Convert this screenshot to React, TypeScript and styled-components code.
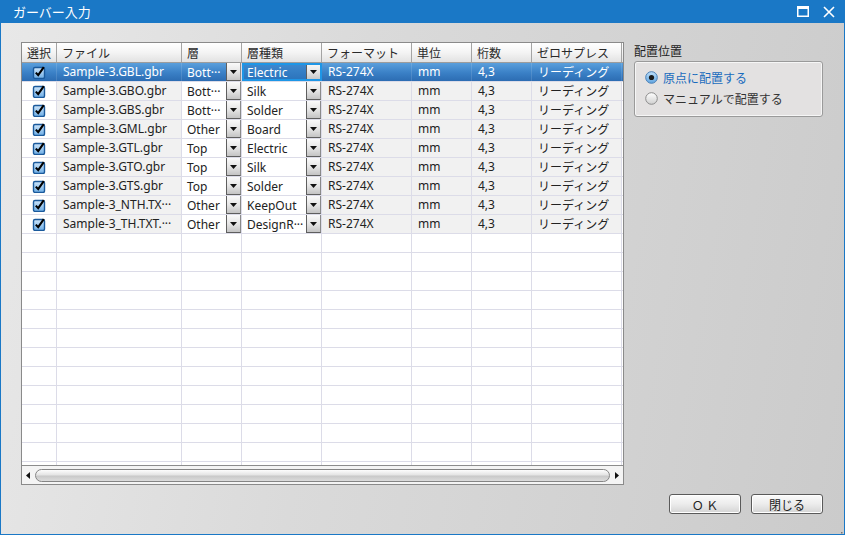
import React from "react";
import styled, { createGlobalStyle, css } from "styled-components";

const Global = createGlobalStyle`
  html, body { margin: 0; padding: 0; }
  body { font-family: "Noto Sans", "Noto Sans CJK JP", sans-serif; }
  #root { width: 845px; height: 535px; }
`;

const Window = styled.div`
  width: 845px;
  height: 535px;
  box-sizing: border-box;
  border: 1px solid #1a78c6;
  border-top: none;
  display: flex;
  flex-direction: column;
  position: relative;
  overflow: hidden;
`;

const TitleBar = styled.div`
  height: 23px;
  flex: none;
  background: #1a78c6;
  display: flex;
  align-items: center;
  padding: 0 6px 0 12px;
  color: #fff;
  font-size: 13px;
  font-family: "Noto Sans CJK JP", sans-serif;
`;

const Title = styled.div`
  flex: 1;
  line-height: 23px;
  margin-top: -1px;
`;

const TitleButtons = styled.div`
  display: flex;
  align-items: center;
  gap: 8px;
`;

const TitleBtn = styled.div`
  width: 18px;
  height: 18px;
  display: flex;
  align-items: center;
  justify-content: center;
`;

const Body = styled.div`
  flex: 1;
  background: linear-gradient(100deg, #e8e8e8 0%, #dadada 40%, #cbcbcb 100%);
  display: grid;
  grid-template-columns: 603px 189px;
  column-gap: 10px;
  padding: 19px 21px 20px 20px;
  box-sizing: border-box;
  font-family: "Noto Sans", "Noto Sans CJK JP", sans-serif;
  font-size: 12px;
  color: #222;
`;

const GridBox = styled.div`
  height: 443px;
  box-sizing: border-box;
  border: 1px solid #8a8a8a;
  background: #fff;
  display: flex;
  flex-direction: column;
  overflow: hidden;
`;

const Rows = styled.div`
  flex: 1;
  overflow: hidden;
`;

const COLS = "35px 125px 60px 80px 90px 60px 60px 90px 1fr";

const HeaderRow = styled.div`
  display: grid;
  grid-template-columns: ${COLS};
  height: 20px;
  box-sizing: border-box;
  border-bottom: 1px solid #9c9c9c;
  background: linear-gradient(#ffffff, #f4f4f4 50%, #e2e2e2);
`;

const HeaderCell = styled.div`
  border-right: 1px solid #a4a4a4;
  padding-left: 5px;
  font-family: "Noto Sans CJK JP", sans-serif;
  font-size: 12px;
  line-height: 19px;
  color: #2a2a2a;
  white-space: nowrap;
  overflow: hidden;
`;

const Row = styled.div<{ $sel?: boolean }>`
  display: grid;
  grid-template-columns: ${COLS};
  height: 19px;
  box-sizing: border-box;
  border-bottom: 1px solid #dcdce8;
  ${(p) =>
    p.$sel &&
    css`
      background: linear-gradient(#5a9fdc, #3a80c6 55%, #2c6cb2);
      color: #fff;
    `}
`;

const Cell = styled.div<{ $bg?: string; $sel?: boolean; $center?: boolean; $jp?: boolean }>`
  border-right: 1px solid #dcdce8;
  background: ${(p) => (p.$sel ? "transparent" : p.$bg || "#fff")};
  padding-left: ${(p) => (p.$center ? "0" : "6px")};
  display: flex;
  align-items: center;
  justify-content: ${(p) => (p.$center ? "center" : "flex-start")};
  white-space: nowrap;
  overflow: hidden;
  line-height: 18px;
  font-family: ${(p) => (p.$jp ? `"Noto Sans CJK JP", sans-serif` : `"Noto Sans", "Noto Sans CJK JP", sans-serif`)};
  ${(p) => p.$sel && css`border-right-color: rgba(255,255,255,0.12);`}
`;

const ComboCell = styled.div<{ $sel?: boolean; $focus?: boolean }>`
  border-right: 1px solid #dcdce8;
  background: ${(p) => (p.$sel ? "transparent" : "#fff")};
  display: flex;
  align-items: stretch;
  overflow: hidden;
  box-sizing: border-box;
  ${(p) =>
    p.$focus &&
    css`
      outline: 2px solid #1e96e6;
      outline-offset: -2px;
      background: linear-gradient(#3f8ad0, #2a72ba);
    `}
`;

const ComboText = styled.div`
  flex: 1;
  padding-left: 5px;
  display: flex;
  align-items: center;
  white-space: nowrap;
  overflow: hidden;
`;

const ComboBtn = styled.div`
  width: 15px;
  flex: none;
  box-sizing: border-box;
  border-left: 1px solid #5e5e5e;
  border-right: 1px solid #8a8a8a;
  border-bottom: 1px solid #5e5e5e;
  background: linear-gradient(#fafafa, #e6e6e6 50%, #c4c4c4);
  display: flex;
  align-items: center;
  justify-content: center;
`;

const Scrollbar = styled.div`
  height: 19px;
  flex: none;
  box-sizing: border-box;
  border-top: 1px solid #8c8c8c;
  background: #f4f4f4;
  display: flex;
  align-items: center;
  padding: 0 3px 0 3px;
  gap: 4px;
`;

const Arrow = styled.div`
  width: 6px;
  display: flex;
  justify-content: center;
`;

const Thumb = styled.div`
  flex: 1;
  height: 13px;
  box-sizing: border-box;
  border: 1px solid #858585;
  border-radius: 7px;
  background: linear-gradient(#fdfdfd, #e4e4e4 45%, #c9c9c9 55%, #dcdcdc);
`;

const Side = styled.div`
  display: flex;
  flex-direction: column;
`;

const SideLabel = styled.div`
  font-family: "Noto Sans CJK JP", sans-serif;
  font-size: 12px;
  color: #222;
  line-height: 16px;
  margin-top: 1px;
  margin-bottom: 2px;
`;

const Group = styled.div`
  height: 56px;
  box-sizing: border-box;
  border: 1px solid #9a9a9a;
  border-radius: 3px;
  background: #e3e1e1;
  box-shadow: inset 0 0 0 1px #f6f6f6;
  padding: 6px 0 0 10px;
  display: flex;
  flex-direction: column;
  gap: 3px;
`;

const Radio = styled.div<{ $on?: boolean }>`
  display: flex;
  align-items: center;
  gap: 5px;
  height: 18px;
  font-family: "Noto Sans CJK JP", sans-serif;
  font-size: 12px;
  color: ${(p) => (p.$on ? "#1a6bbd" : "#333")};
`;

const Buttons = styled.div`
  margin-top: auto;
  display: flex;
  justify-content: flex-end;
  gap: 10px;
`;

const Button = styled.div`
  width: 72px;
  height: 20px;
  box-sizing: border-box;
  border: 1px solid #5a5a5a;
  border-radius: 3px;
  background: linear-gradient(#fbfbfb, #ececec 50%, #d4d4d4);
  box-shadow: inset 0 0 0 1px #ffffff;
  display: flex;
  align-items: center;
  justify-content: center;
  font-family: "Noto Sans CJK JP", sans-serif;
  font-size: 12px;
  color: #222;
`;

const Grip = styled.div`
  position: absolute;
  right: 1px;
  bottom: 1px;
  width: 10px;
  height: 10px;
`;

const Tri = ({ dir }: { dir: "down" | "left" | "right" }) => {
  if (dir === "down")
    return (
      <svg width="7" height="4" viewBox="0 0 7 4">
        <path d="M0 0H7L3.5 4Z" fill="#111" />
      </svg>
    );
  if (dir === "left")
    return (
      <svg width="4" height="7" viewBox="0 0 4 7">
        <path d="M4 0V7L0 3.5Z" fill="#111" />
      </svg>
    );
  return (
    <svg width="4" height="7" viewBox="0 0 4 7">
      <path d="M0 0V7L4 3.5Z" fill="#111" />
    </svg>
  );
};

const Check = () => (
  <svg width="14" height="14" viewBox="0 0 14 14">
    <defs>
      <linearGradient id="cbg" x1="0" y1="0" x2="0" y2="1">
        <stop offset="0" stopColor="#cfe6fa" />
        <stop offset="1" stopColor="#6eaee6" />
      </linearGradient>
    </defs>
    <rect x="1.5" y="2.5" width="11" height="11" rx="1.5" fill="url(#cbg)" stroke="#1b5a9c" strokeWidth="1.4" />
    <path d="M3.8 7.6L6.2 10.2L11.8 2.2" fill="none" stroke="#000" strokeWidth="2.1" strokeLinejoin="miter" />
  </svg>
);

const RadioIcon = ({ on }: { on?: boolean }) => (
  <svg width="13" height="13" viewBox="0 0 13 13">
    <defs>
      <linearGradient id={on ? "ron" : "roff"} x1="0" y1="0" x2="0" y2="1">
        <stop offset="0" stopColor={on ? "#bfe0fa" : "#ffffff"} />
        <stop offset="1" stopColor={on ? "#5fa4e0" : "#cfcfcf"} />
      </linearGradient>
    </defs>
    <circle cx="6.5" cy="6.5" r="5.8" fill={`url(#${on ? "ron" : "roff"})`} stroke={on ? "#4a7fb6" : "#8c8c8c"} strokeWidth="1" />
    {on && <circle cx="6.5" cy="6.5" r="2.6" fill="#1a1a1a" />}
  </svg>
);

type RowData = { file: string; layer: string; kind: string };

const data: RowData[] = [
  { file: "Sample-3.GBL.gbr", layer: "Bott···", kind: "Electric" },
  { file: "Sample-3.GBO.gbr", layer: "Bott···", kind: "Silk" },
  { file: "Sample-3.GBS.gbr", layer: "Bott···", kind: "Solder" },
  { file: "Sample-3.GML.gbr", layer: "Other", kind: "Board" },
  { file: "Sample-3.GTL.gbr", layer: "Top", kind: "Electric" },
  { file: "Sample-3.GTO.gbr", layer: "Top", kind: "Silk" },
  { file: "Sample-3.GTS.gbr", layer: "Top", kind: "Solder" },
  { file: "Sample-3_NTH.TX···", layer: "Other", kind: "KeepOut" },
  { file: "Sample-3_TH.TXT.···", layer: "Other", kind: "DesignR···" },
];

const headers = ["選択", "ファイル", "層", "層種類", "フォーマット", "単位", "桁数", "ゼロサプレス", ""];
const GREY = "#f1f1f1";

export default function App() {
  const empty = Array.from({ length: 13 });
  return (
    <>
      <Global />
      <Window>
        <TitleBar>
          <Title>ガーバー入力</Title>
          <TitleButtons>
            <TitleBtn>
              <svg width="12" height="11" viewBox="0 0 12 11">
                <rect x="0.75" y="0.75" width="10.5" height="9.5" fill="none" stroke="#fff" strokeWidth="1.5" />
                <rect x="0" y="0" width="12" height="3" fill="#fff" />
              </svg>
            </TitleBtn>
            <TitleBtn>
              <svg width="12" height="12" viewBox="0 0 12 12">
                <path d="M1 1L11 11M11 1L1 11" stroke="#fff" strokeWidth="1.6" />
              </svg>
            </TitleBtn>
          </TitleButtons>
        </TitleBar>
        <Body>
          <GridBox>
            <HeaderRow>
              {headers.map((h, i) => (
                <HeaderCell key={i}>{h}</HeaderCell>
              ))}
            </HeaderRow>
            <Rows>
              {data.map((r, i) => {
                const sel = i === 0;
                return (
                  <Row key={i} $sel={sel}>
                    <Cell $center $sel={sel}>
                      <Check />
                    </Cell>
                    <Cell $bg={GREY} $sel={sel}>{r.file}</Cell>
                    <ComboCell $sel={sel}>
                      <ComboText>{r.layer}</ComboText>
                      <ComboBtn>
                        <Tri dir="down" />
                      </ComboBtn>
                    </ComboCell>
                    <ComboCell $sel={sel} $focus={sel}>
                      <ComboText>{r.kind}</ComboText>
                      <ComboBtn>
                        <Tri dir="down" />
                      </ComboBtn>
                    </ComboCell>
                    <Cell $bg={GREY} $sel={sel}>RS-274X</Cell>
                    <Cell $bg={GREY} $sel={sel}>mm</Cell>
                    <Cell $bg={GREY} $sel={sel}>4,3</Cell>
                    <Cell $bg={GREY} $sel={sel} $jp>リーディング</Cell>
                    <Cell $sel={sel} />
                  </Row>
                );
              })}
              {empty.map((_, i) => (
                <Row key={"e" + i}>
                  {headers.map((_, j) => (
                    <Cell key={j} />
                  ))}
                </Row>
              ))}
            </Rows>
            <Scrollbar>
              <Arrow>
                <Tri dir="left" />
              </Arrow>
              <Thumb />
              <Arrow>
                <Tri dir="right" />
              </Arrow>
            </Scrollbar>
          </GridBox>
          <Side>
            <SideLabel>配置位置</SideLabel>
            <Group>
              <Radio $on>
                <RadioIcon on />
                原点に配置する
              </Radio>
              <Radio>
                <RadioIcon />
                マニュアルで配置する
              </Radio>
            </Group>
            <Buttons>
              <Button>Ｏ Ｋ</Button>
              <Button>閉じる</Button>
            </Buttons>
          </Side>
        </Body>
        <Grip>
          <svg width="10" height="10" viewBox="0 0 10 10">
            {[
              [8, 2],
              [5, 5],
              [8, 5],
              [2, 8],
              [5, 8],
              [8, 8],
            ].map(([x, y], k) => (
              <rect key={k} x={x} y={y} width="1.5" height="1.5" fill="#777" />
            ))}
          </svg>
        </Grip>
      </Window>
    </>
  );
}
